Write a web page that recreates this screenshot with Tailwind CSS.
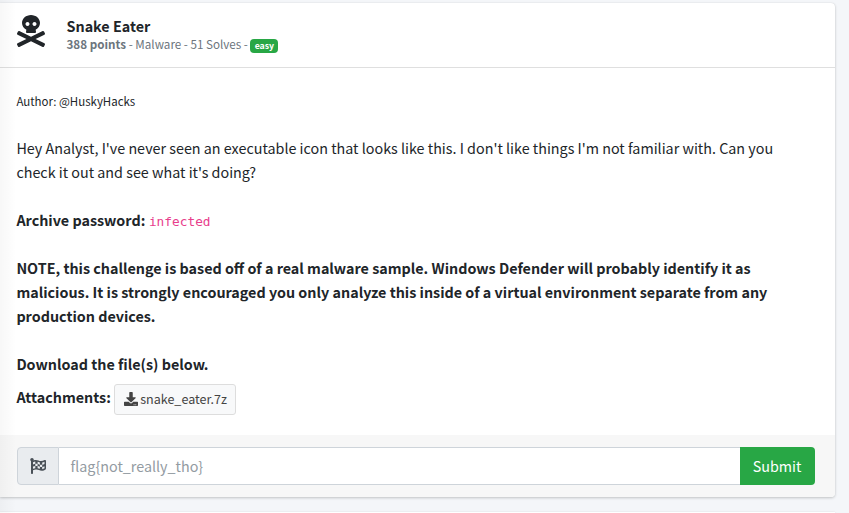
<!DOCTYPE html>
<html lang="en">
<head>
<meta charset="utf-8">
<title>Snake Eater</title>
<script src="https://cdn.jsdelivr.net/npm/@tailwindcss/browser@4"></script>
</head>
<body class="relative h-[513px] overflow-hidden bg-[#f4f6f9] font-['Noto_Sans_CJK_JP','Noto_Sans_CJK_SC','Open_Sans',sans-serif] text-[14.34px] leading-6 text-[#212529]">
<main class="flex h-[513px] flex-col gap-[15px] pt-[3px] pr-[14px]">
  <article class="flex h-[494px] shrink-0 flex-col rounded-r bg-white shadow-[0_0_1px_rgba(0,0,0,0.125),0_1px_3px_rgba(0,0,0,0.2)]">
    <header class="flex h-[65px] shrink-0 border-b border-[#dfdfdf] pt-3 pl-[16.5px]">
      <svg class="h-8 w-7 shrink-0" viewBox="0 0 448 512" fill="currentColor"><path d="M439.15 453.06L297.17 384l141.99-69.06c7.9-3.95 11.11-13.56 7.15-21.46L432 264.85c-3.95-7.9-13.56-11.11-21.47-7.16L224 348.41 37.47 257.69c-7.9-3.95-17.51-.75-21.47 7.16L1.69 293.48c-3.95 7.9-.75 17.51 7.15 21.46L150.83 384 8.85 453.06c-7.9 3.95-11.11 13.56-7.15 21.47l14.31 28.63c3.95 7.9 13.56 11.11 21.47 7.15L224 419.59l186.53 90.72c7.9 3.95 17.51.75 21.47-7.15l14.31-28.63c3.95-7.91.74-17.52-7.16-21.47zM150 237.28l-5.48 25.87c-2.67 12.62 5.42 24.85 16.45 24.85h126.08c11.03 0 19.12-12.23 16.45-24.85l-5.5-25.87c41.78-22.41 70-62.75 70-109.28C368 57.31 303.53 0 224 0S80 57.31 80 128c0 46.53 28.22 86.87 70 109.28zM280 112c17.65 0 32 14.35 32 32s-14.35 32-32 32-32-14.35-32-32 14.35-32 32-32zm-112 0c17.65 0 32 14.35 32 32s-14.35 32-32 32-32-14.35-32-32 14.35-32 32-32z"/></svg>
      <div class="-mt-px ml-[22px] whitespace-nowrap">
        <h1 class="h-5 font-bold leading-6">Snake Eater</h1>
        <p class="flex h-5 items-center text-[11.65px] leading-5 text-[#6c757d]"><span><b>388 points</b> - Malware - 51 Solves -</span><span class="mt-[3px] ml-[2.5px] flex h-[14px] w-7 items-center justify-center rounded bg-[#28a745] text-[8.75px] font-bold text-white">easy</span></p>
      </div>
    </header>
    <section class="h-[367px] shrink-0 pt-[21px] pl-[16.4px] whitespace-nowrap">
      <p class="text-[11.47px]">Author: @HuskyHacks</p>
      <p class="mt-[23px]">Hey Analyst, I've never seen an executable icon that looks like this. I don't like things I'm not familiar with. Can you<br>check it out and see what it's doing?</p>
      <p class="mt-6 flex h-6 gap-[3.6px]"><b>Archive password:</b><code class="pt-[2px] font-['DejaVu_Sans_Mono',monospace] text-[12.8px] text-[#e83e8c]">infected</code></p>
      <p class="mt-6 font-bold">NOTE, this challenge is based off of a real malware sample. Windows Defender will probably identify it as<br>malicious. It is strongly encouraged you only analyze this inside of a virtual environment separate from any<br>production devices.</p>
      <p class="mt-6 font-bold">Download the file(s) below.</p>
      <div class="mt-2 flex h-[31px] gap-[3.5px]">
        <b class="pt-px">Attachments:</b>
        <a class="flex w-[122px] items-center justify-center gap-[2.5px] rounded-[3px] border border-[#ddd] bg-[#f8f9fa] text-[12.55px] text-[#444]"><svg class="-mt-[2px] size-[14px]" viewBox="0 0 512 512" fill="currentColor"><path d="M216 0h80c13.3 0 24 10.7 24 24v168h87.7c17.8 0 26.7 21.5 14.1 34.1L269.7 378.3c-7.5 7.5-19.8 7.5-27.3 0L90.1 226.1c-12.6-12.6-3.7-34.1 14.1-34.1H192V24c0-13.3 10.7-24 24-24zm296 376v112c0 13.3-10.7 24-24 24H24c-13.3 0-24-10.7-24-24V376c0-13.3 10.7-24 24-24h146.7l49 49c20.1 20.1 52.5 20.1 72.6 0l49-49H488c13.3 0 24 10.7 24 24zm-124 88c0-11-9-20-20-20s-20 9-20 20 9 20 20 20 20-9 20-20zm64 0c0-11-9-20-20-20s-20 9-20 20 9 20 20 20 20-9 20-20z"/></svg><span class="-mt-[2px]">snake_eater.7z</span></a>
      </div>
    </section>
    <footer class="flex h-[62px] shrink-0 rounded-br bg-[#f7f7f7] pt-3 pr-5 pl-[17px]">
      <div class="flex h-[38px] w-[42px] items-center justify-center rounded-l border border-[#ced4da] bg-[#e9ecef] text-[#495057]"><svg class="size-4" viewBox="0 0 512 512" fill="currentColor"><path d="M243.2 189.9V258c26.1 5.9 49.3 15.6 73.6 22.3v-68.2c-26-5.8-49.4-15.5-73.6-22.2zm223.3-123c-34.3 15.9-76.5 31.9-117 31.9C296 98.8 251.7 64 184.3 64c-25 0-47.3 4.4-68 12 2.8-7.3 4.1-15.2 3.6-23.6C118.1 24 94.8 1.2 66.3 0 34.3-1.3 8 24.3 8 56c0 19 9.5 35.8 24 45.9V488c0 13.3 10.7 24 24 24h16c13.3 0 24-10.7 24-24v-94.4c28.3-12.1 63.6-22.1 114.4-22.1 53.6 0 97.8 34.8 165.2 34.8 48.2 0 86.7-16.3 122.5-40.9 8.7-6 13.8-15.8 13.8-26.4V95.9c.1-23.3-24.2-38.8-45.4-29zM169.6 325.5c-25.8 2.7-50 8.2-73.6 16.6v-70.5c26.2-9.3 47.5-15 73.6-17.4v71.3zM464 191c-23.6 9.8-46.3 19.5-73.6 23.9V286c24.8-3.4 51.4-11.8 73.6-26v70.5c-25.1 16.1-48.5 24.7-73.6 27.1V286c-27 3.7-47.9 1.5-73.6-5.6v67.4c-23.9-7.4-47.3-16.7-73.6-21.3V258c-19.7-4.4-40.8-6.8-73.6-3.8v-70c-22.4 3.1-44.6 10.2-73.6 20.9v-70.5c33.2-12.2 50.1-19.8 73.6-22v71.6c27-3.7 48.4-1.3 73.6 5.7v-67.4c23.7 7.4 47.2 16.7 73.6 21.3v68.4c23.7 5.3 47.6 6.9 73.6 2.7V143c27-4.8 52.3-13.6 73.6-22.5z"/></svg></div>
      <div class="flex h-[38px] flex-1 items-center border-y border-[#ced4da] bg-white pl-[11.5px] text-[#939ba2]">flag{not_really_tho}</div>
      <button class="h-[38px] w-[75px] rounded-r bg-[#28a745] pr-px text-white">Submit</button>
    </footer>
  </article>
  <div class="min-h-0 flex-1 bg-white shadow-[0_0_1px_rgba(0,0,0,0.125),0_1px_3px_rgba(0,0,0,0.2)]"></div>
</main>
<div class="pointer-events-none absolute inset-y-0 left-0 w-4 bg-linear-to-r from-black/3 to-transparent"></div>
</body>
</html>
